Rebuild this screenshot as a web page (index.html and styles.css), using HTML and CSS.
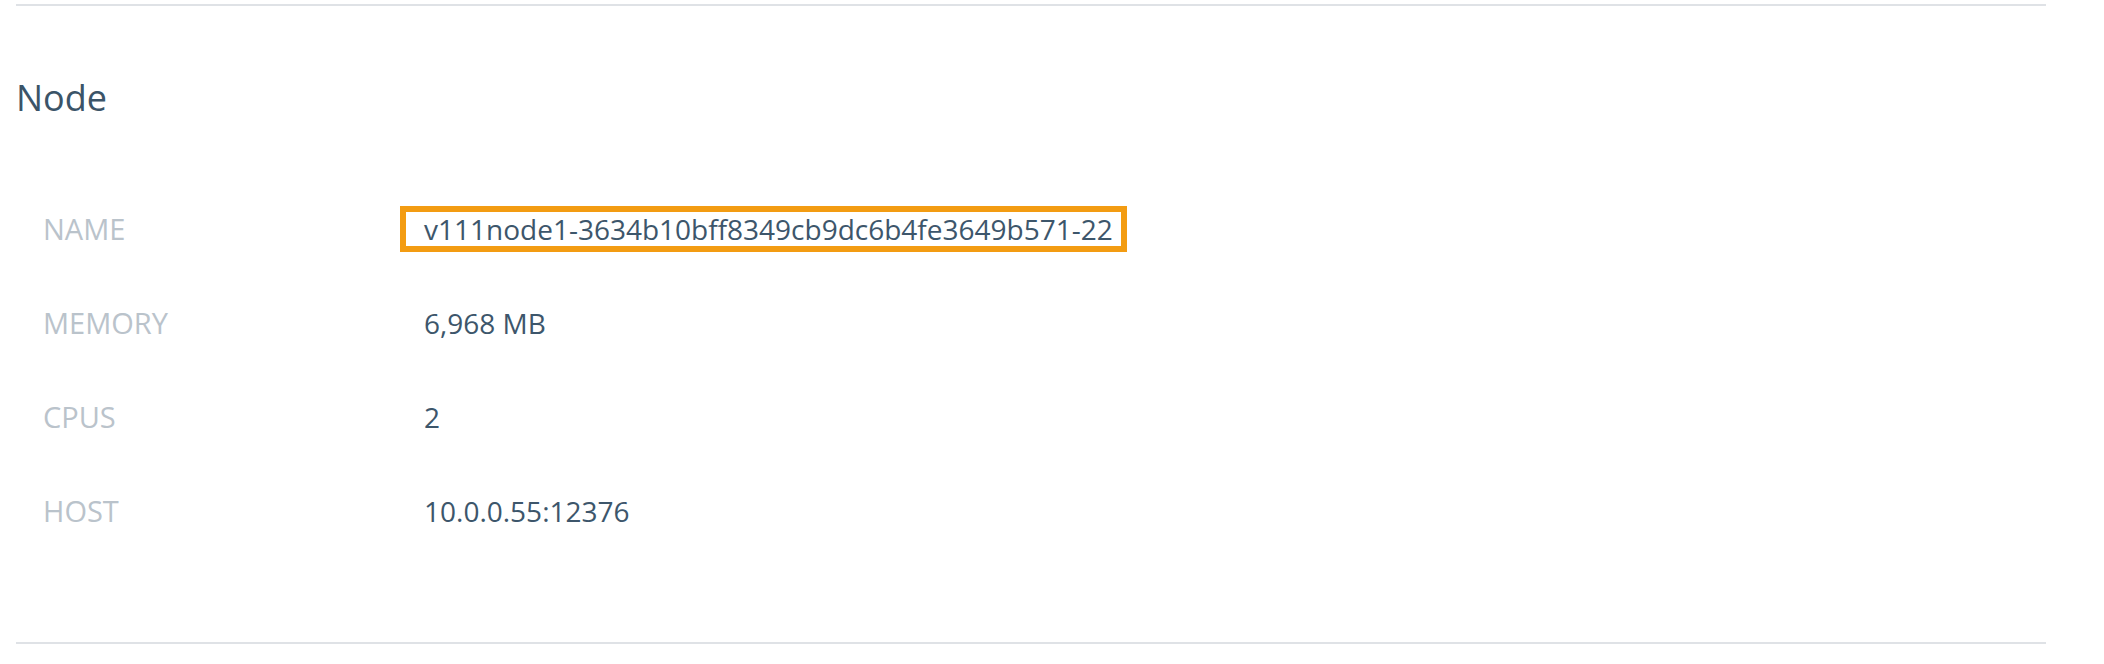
FILE: index.html
```html
<!DOCTYPE html>
<html>
<head>
<meta charset="utf-8">
<link rel="stylesheet" href="styles.css">
</head>
<body>
<section class="panel">
  <div class="rule"></div>
  <h2 class="title">Node</h2>
  <dl class="props">
    <dt class="label">NAME</dt>
    <dd class="value value-highlight">v111node1-3634b10bff8349cb9dc6b4fe3649b571-22</dd>
    <dt class="label">MEMORY</dt>
    <dd class="value">6,968 MB</dd>
    <dt class="label">CPUS</dt>
    <dd class="value">2</dd>
    <dt class="label">HOST</dt>
    <dd class="value">10.0.0.55:12376</dd>
  </dl>
  <div class="rule"></div>
</section>
</body>
</html>
```
FILE: styles.css
```css
html, body {
  margin: 0;
  padding: 0;
  background: #ffffff;
}

body {
  font-family: "Open Sans", "DejaVu Sans", sans-serif;
  color: #3e5569;
}

.panel {
  padding: 4px 58px 0 16px;
}

.rule {
  height: 2px;
  background: #dfe2e6;
}

.title {
  margin: 70px 0 0 0;
  font-size: 36px;
  line-height: 43px;
  font-weight: 500;
  color: #3b5468;
}

.props {
  margin: 63px 0 84px 0;
  padding-left: 27px;
  display: grid;
  grid-template-columns: 357px auto;
  grid-auto-rows: 94px;
  align-items: center;
  justify-items: start;
}

.label {
  margin: 0;
  font-size: 29px;
  line-height: 34px;
  font-weight: 500;
  color: #bac3cb;
}

.value {
  margin: 0;
  font-size: 28px;
  line-height: 34px;
  font-weight: 500;
  color: #3d566b;
  padding: 0 8px 0 18px;
  border: 6px solid transparent;
}

.value-highlight {
  border-color: #f39c12;
}
```
